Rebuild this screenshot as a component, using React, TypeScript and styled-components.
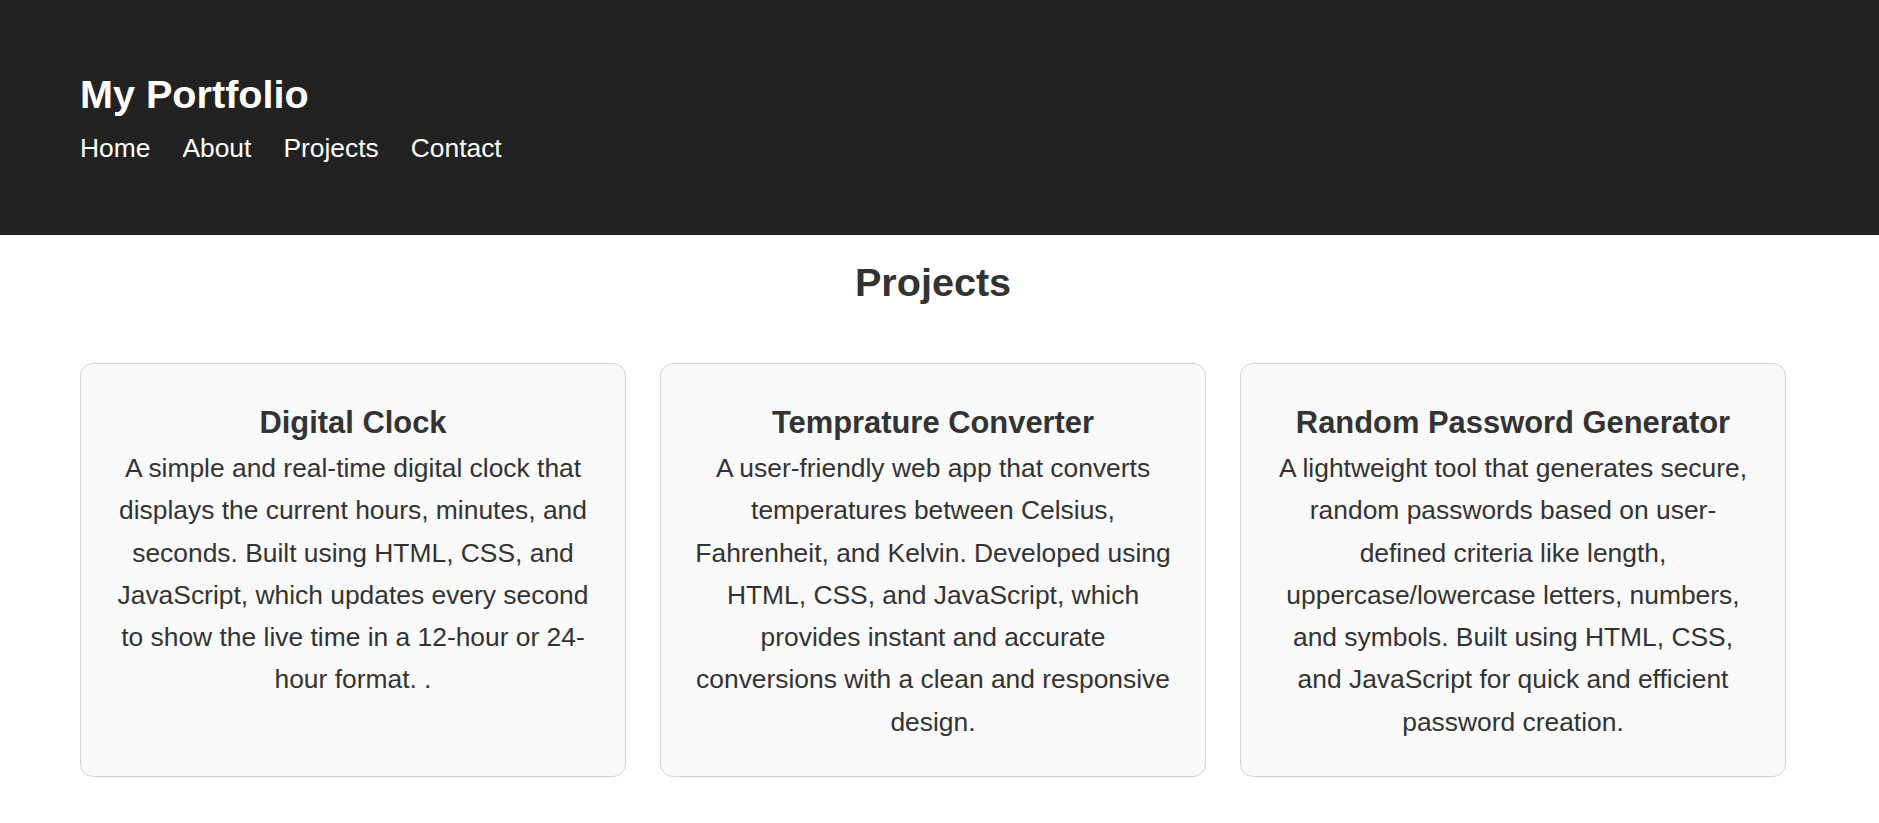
import React from "react";
import styled, { createGlobalStyle } from "styled-components";

const GlobalStyle = createGlobalStyle`
  html, body {
    margin: 0;
    padding: 0;
    background: #ffffff;
  }
  body {
    font-family: "Liberation Sans", Arial, sans-serif;
    font-size: 26.4px;
    color: #333333;
  }
  * { box-sizing: border-box; }
`;

const Header = styled.header`
  background: #222222;
  color: #ffffff;
  padding: 71px 80px 71px;
`;

const Brand = styled.h1`
  margin: 0;
  font-size: 39.6px;
  line-height: 1.2;
  font-weight: 700;
`;

const Nav = styled.nav`
  display: flex;
  gap: 32px;
  margin-top: 14px;
`;

const NavLink = styled.a`
  color: #ffffff;
  text-decoration: none;
  font-size: 26.4px;
  line-height: 1.2;
`;

const Main = styled.main`
  padding: 24px 93px 40px 80px;
`;

const SectionTitle = styled.h2`
  margin: 0 0 56px;
  text-align: center;
  font-size: 39.6px;
  line-height: 1.2;
  font-weight: 700;
  color: #333333;
`;

const Grid = styled.div`
  display: grid;
  grid-template-columns: repeat(3, 1fr);
  gap: 34px;
  align-items: stretch;
`;

const Card = styled.article`
  background: #f9f9f9;
  border: 1px solid #d2d2d2;
  border-radius: 13px;
  padding: 34px 32px 33px;
  text-align: center;
`;

const CardTitle = styled.h3`
  margin: 0;
  font-size: 30.9px;
  line-height: 1.6;
  font-weight: 700;
  color: #333333;
`;

const CardText = styled.p`
  margin: 0;
  font-size: 26.4px;
  line-height: 1.6;
  color: #333333;
`;

const projects = [
  {
    title: "Digital Clock",
    text: "A simple and real-time digital clock that displays the current hours, minutes, and seconds. Built using HTML, CSS, and JavaScript, which updates every second to show the live time in a 12-hour or 24-hour format. .",
  },
  {
    title: "Temprature Converter",
    text: "A user-friendly web app that converts temperatures between Celsius, Fahrenheit, and Kelvin. Developed using HTML, CSS, and JavaScript, which provides instant and accurate conversions with a clean and responsive design.",
  },
  {
    title: "Random Password Generator",
    text: "A lightweight tool that generates secure, random passwords based on user-defined criteria like length, uppercase/lowercase letters, numbers, and symbols. Built using HTML, CSS, and JavaScript for quick and efficient password creation.",
  },
];

export default function App() {
  return (
    <>
      <GlobalStyle />
      <Header>
        <Brand>My Portfolio</Brand>
        <Nav>
          <NavLink href="#home">Home</NavLink>
          <NavLink href="#about">About</NavLink>
          <NavLink href="#projects">Projects</NavLink>
          <NavLink href="#contact">Contact</NavLink>
        </Nav>
      </Header>
      <Main>
        <SectionTitle>Projects</SectionTitle>
        <Grid>
          {projects.map((p) => (
            <Card key={p.title}>
              <CardTitle>{p.title}</CardTitle>
              <CardText>{p.text}</CardText>
            </Card>
          ))}
        </Grid>
      </Main>
    </>
  );
}
